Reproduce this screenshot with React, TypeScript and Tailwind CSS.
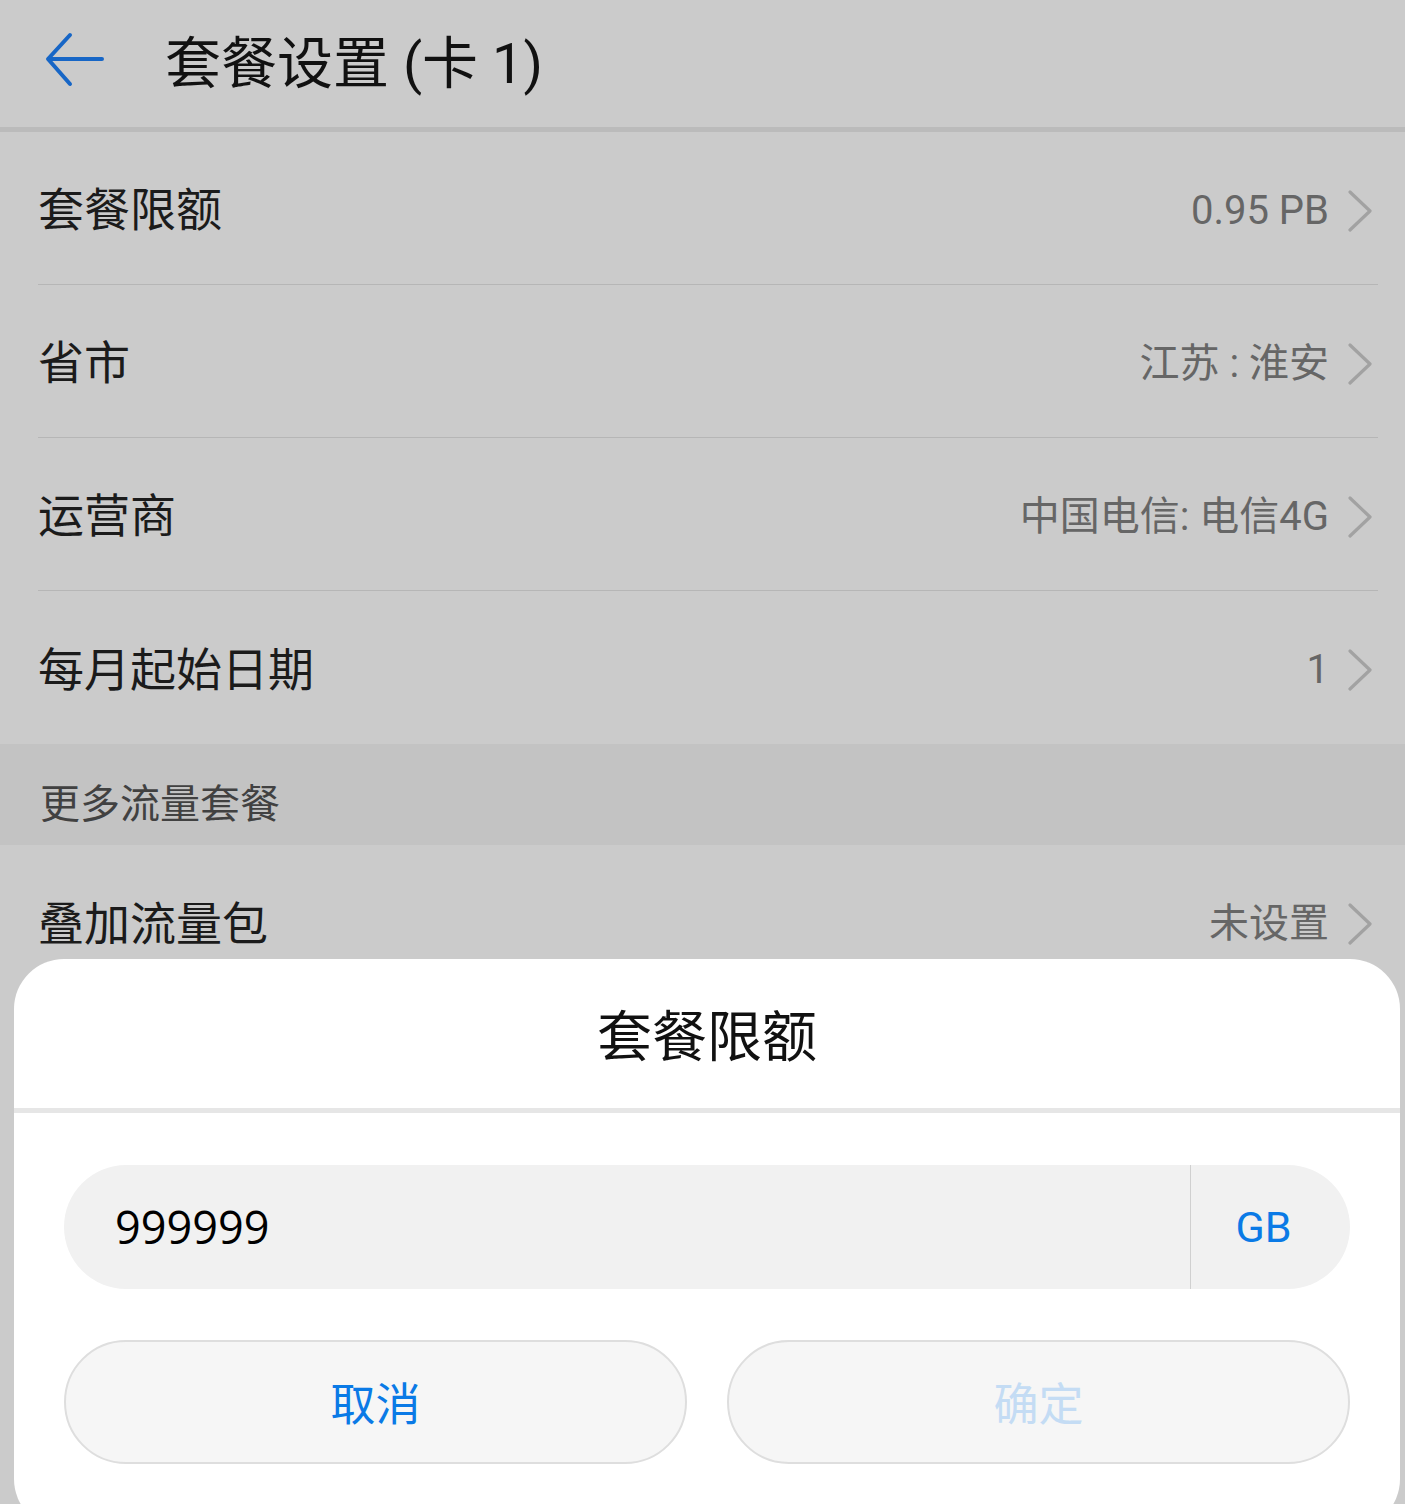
import React from "react";

const font = { fontFamily: 'Roboto, "Noto Sans CJK SC", sans-serif' };

interface Row {
  label: string;
  value: string;
}

const rows: Row[] = [
  { label: "套餐限额", value: "0.95 PB" },
  { label: "省市", value: "江苏 : 淮安" },
  { label: "运营商", value: "中国电信: 电信4G" },
  { label: "每月起始日期", value: "1" },
];

function Chevron() {
  return (
    <svg width="26" height="42" viewBox="0 0 26 42" className="shrink-0">
      <path d="M3 2 L23 21 L3 40" fill="none" stroke="#a2a2a2" strokeWidth="3.2" strokeLinecap="round" strokeLinejoin="round" />
    </svg>
  );
}

function SettingRow({ label, value, divider }: Row & { divider: boolean }) {
  return (
    <div className="pl-[38px] pr-[27px]">
      <div className={["flex h-[153px] items-center justify-between pt-[5px]", divider ? "border-b border-[#b6b6b6]" : ""].join(" ")}>
        <span className="text-[46px] text-[#1b1b1b]">{label}</span>
        <div className="flex items-center gap-[18px] pr-[5px]">
          <span className="text-[40px] text-[#666666]">{value}</span>
          <Chevron />
        </div>
      </div>
    </div>
  );
}

export default function App() {
  return (
    <div className="relative h-[1504px] w-[1405px] overflow-hidden bg-[#cbcbcb]" style={font}>
      {/* Header */}
      <div className="flex h-[127px] items-center">
        <svg width="70" height="70" viewBox="0 0 70 70" className="ml-[40px]">
          <path d="M62 30 L9 30 M30 6 L8 30 L30 55" fill="none" stroke="#1766c6" strokeWidth="4" strokeLinecap="round" strokeLinejoin="round" />
        </svg>
        <h1 className="ml-[55px] text-[56px] leading-none text-[#111111]">套餐设置 (卡 1)</h1>
      </div>
      <div className="h-[5px] bg-[#bbbbbb]" />

      {rows.map((r, i) => (
        <SettingRow key={r.label} {...r} divider={i < rows.length - 1} />
      ))}

      <div className="flex h-[101px] items-center bg-[#c3c3c3] px-[40px] pt-[20px]">
        <span className="text-[40px] text-[#414141]">更多流量套餐</span>
      </div>

      <SettingRow label="叠加流量包" value="未设置" divider={false} />

      {/* Dialog */}
      <div className="absolute left-[14px] top-[959px] h-[570px] w-[1386px] rounded-[50px] bg-white">
        <div className="flex h-[149px] items-center justify-center pt-[8px]">
          <span className="text-[55px] text-[#111111]">套餐限额</span>
        </div>
        <div className="h-[5px] bg-[#e6e6e6]" />
        <div className="px-[50px] pt-[52px]">
          <div className="flex h-[124px] items-center rounded-full bg-[#f1f1f1]">
            <span className="flex-1 pl-[51px] text-[45px] text-black" style={{ fontFamily: '"Open Sans", sans-serif' }}>
              999999
            </span>
            <div className="h-full w-px bg-[#d0d0d0]" />
            <span className="flex w-[159px] justify-center pr-[14px] text-[43px] text-[#0a7ae6]">GB</span>
          </div>
          <div className="mt-[51px] flex gap-[40px]">
            <button className="flex h-[124px] flex-1 items-center justify-center rounded-full border-2 border-[#dedede] bg-[#f6f6f6] pt-[8px] text-[45px] text-[#0a7ae6]">
              取消
            </button>
            <button className="flex h-[124px] flex-1 items-center justify-center rounded-full border-2 border-[#dedede] bg-[#f6f6f6] pt-[8px] text-[45px] text-[#c4dcf4]">
              确定
            </button>
          </div>
        </div>
      </div>
    </div>
  );
}
